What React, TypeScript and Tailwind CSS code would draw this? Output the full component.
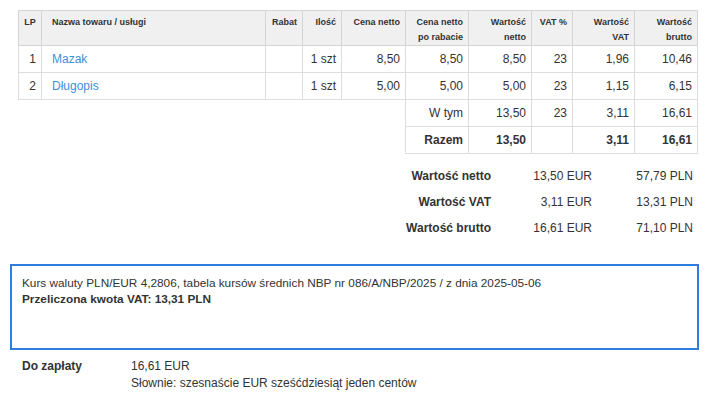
const rows = [
  { lp: "1", name: "Mazak", qty: "1 szt", price: "8,50", after: "8,50", net: "8,50", vat: "23", vatVal: "1,96", gross: "10,46" },
  { lp: "2", name: "Długopis", qty: "1 szt", price: "5,00", after: "5,00", net: "5,00", vat: "23", vatVal: "1,15", gross: "6,15" },
];

const totals = [
  { label: "Wartość netto", eur: "13,50 EUR", pln: "57,79 PLN" },
  { label: "Wartość VAT", eur: "3,11 EUR", pln: "13,31 PLN" },
  { label: "Wartość brutto", eur: "16,61 EUR", pln: "71,10 PLN" },
];

const th = "border border-[#d4d4d4] align-top px-[5px] pt-[4px] pb-0 text-[9px] leading-[15px] font-bold text-[#333]";
const cell = "border border-[#dedede] px-[5px] h-[27px] text-[12px]";
const td = `${cell} text-right`;

const App = () => {
  return (
    <div className="w-[712px] h-[395px] bg-white text-[#333] font-['Liberation_Sans',Arial,sans-serif] overflow-hidden">
      {/* positions table */}
      <div className="pt-[10px] pl-[18px]">
        <table className="table-fixed border-collapse w-[679px]">
          <colgroup>
            <col className="w-[23px]" />
            <col className="w-[224px]" />
            <col className="w-[37px]" />
            <col className="w-[39px]" />
            <col className="w-[64px]" />
            <col className="w-[63px]" />
            <col className="w-[63px]" />
            <col className="w-[41px]" />
            <col className="w-[62px]" />
            <col className="w-[63px]" />
          </colgroup>
          <thead>
            <tr className="bg-[#f0f0f0] h-[34px]">
              <th className={`${th} text-center`}>LP</th>
              <th className={`${th} text-left pl-[10px]`}>Nazwa towaru / usługi</th>
              <th className={`${th} text-right`}>Rabat</th>
              <th className={`${th} text-right`}>Ilość</th>
              <th className={`${th} text-right`}>Cena netto</th>
              <th className={`${th} text-right`}>Cena netto po rabacie</th>
              <th className={`${th} text-right`}>Wartość netto</th>
              <th className={`${th} text-right`}>VAT %</th>
              <th className={`${th} text-right`}>Wartość VAT</th>
              <th className={`${th} text-right`}>Wartość brutto</th>
            </tr>
          </thead>
          <tbody>
            {rows.map((r) => (
              <tr key={r.lp}>
                <td className={td}>{r.lp}</td>
                <td className={`${cell} text-left pl-[10px] text-[#3f8fd8]`}>{r.name}</td>
                <td className={td}></td>
                <td className={td}>{r.qty}</td>
                <td className={td}>{r.price}</td>
                <td className={td}>{r.after}</td>
                <td className={td}>{r.net}</td>
                <td className={td}>{r.vat}</td>
                <td className={td}>{r.vatVal}</td>
                <td className={td}>{r.gross}</td>
              </tr>
            ))}
            <tr>
              <td colSpan={5} className="border-0 border-t border-[#dedede]"></td>
              <td className={td}>W tym</td>
              <td className={td}>13,50</td>
              <td className={td}>23</td>
              <td className={td}>3,11</td>
              <td className={td}>16,61</td>
            </tr>
            <tr className="font-bold">
              <td colSpan={5} className="border-0"></td>
              <td className={td}>Razem</td>
              <td className={td}>13,50</td>
              <td className={td}></td>
              <td className={td}>3,11</td>
              <td className={td}>16,61</td>
            </tr>
          </tbody>
        </table>
      </div>

      {/* summary */}
      <div className="mt-[14px] flex flex-col gap-[10px] text-[12px] leading-[16px]">
        {totals.map((t) => (
          <div key={t.label} className="flex">
            <div className="w-[491px] text-right font-bold">{t.label}</div>
            <div className="w-[101px] text-right">{t.eur}</div>
            <div className="w-[101px] text-right">{t.pln}</div>
          </div>
        ))}
      </div>

      {/* exchange rate box */}
      <div className="mt-[28px] ml-[10px] w-[689px] h-[86px] border-2 border-[#2f7de1] px-[10px] pt-[9px] text-[11.8px] leading-[16px]">
        <div>Kurs waluty PLN/EUR 4,2806, tabela kursów średnich NBP nr 086/A/NBP/2025 / z dnia 2025-05-06</div>
        <div className="font-bold">Przeliczona kwota VAT: 13,31 PLN</div>
      </div>

      {/* payment */}
      <div className="mt-[8px] flex text-[12px] leading-[17px]">
        <div className="w-[131px] pl-[22px] font-bold">Do zapłaty</div>
        <div>
          <div>16,61 EUR</div>
          <div>Słownie: szesnaście EUR sześćdziesiąt jeden centów</div>
        </div>
      </div>
    </div>
  );
};

export default App;
